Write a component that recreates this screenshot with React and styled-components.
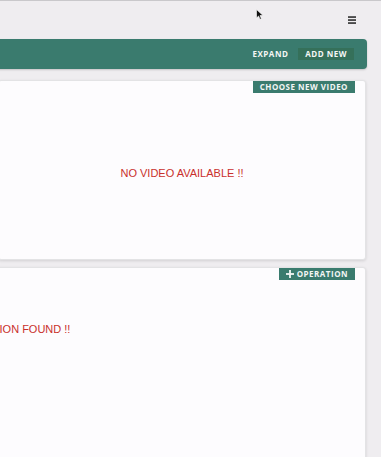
import React from "react";
import styled, { createGlobalStyle } from "styled-components";

const Global = createGlobalStyle`
  html, body { margin: 0; padding: 0; }
  body {
    background: #efedf0;
    font-family: "Liberation Sans", Arial, sans-serif;
    overflow: hidden;
  }
  #root { min-height: 457px; }
`;

const Page = styled.div`
  position: relative;
  min-height: 457px;
  border-top: 1px solid #c9c8cb;
  overflow: hidden;
`;

const Header = styled.header`
  height: 38px;
  display: flex;
  align-items: center;
  justify-content: flex-end;
  padding-right: 25px;
`;

const MenuButton = styled.button`
  background: none;
  border: 0;
  padding: 0;
  width: 8px;
  height: 8px;
  display: flex;
  color: #222;
  cursor: pointer;
`;

const Cursor = styled.svg`
  position: absolute;
  left: 256px;
  top: 8px;
`;

const Shift = styled.div`
  margin-left: -360px;
  margin-right: 14px;
  display: flex;
  flex-direction: column;
`;

const Toolbar = styled.div`
  height: 30px;
  background: #3a7b6e;
  border-radius: 4px;
  box-shadow: 0 1px 2px rgba(0, 0, 0, 0.18);
  display: flex;
  align-items: center;
  justify-content: flex-end;
  gap: 10px;
  padding-right: 13px;
`;

const ToolbarButton = styled.button`
  border: 0;
  background: ${(p) => (p.$filled ? "#35705a" : "transparent")};
  color: #f4f6f5;
  font-family: "Open Sans", Lato, sans-serif;
  font-weight: 700;
  font-size: 8px;
  letter-spacing: 0.5px;
  height: 12px;
  line-height: 12px;
  padding: 0 ${(p) => (p.$filled ? "7px" : "0")};
  cursor: pointer;
`;

const Grid = styled.div`
  display: grid;
  grid-template-columns: 350px 368px;
  column-gap: 8px;
  row-gap: 7px;
  margin-top: 11px;
  margin-right: 1px;
`;

const Card = styled.section`
  grid-column: ${(p) => p.$span};
  background: #fdfcfe;
  border: 1px solid #e3e3e5;
  border-radius: 3px;
  box-shadow: 0 1px 3px rgba(0, 0, 0, 0.12);
  height: ${(p) => p.$height};
  display: flex;
  flex-direction: column;
  box-sizing: border-box;
`;

const CardActions = styled.div`
  display: flex;
  justify-content: flex-end;
  padding-right: 10px;
`;

const ActionButton = styled.button`
  border: 0;
  background: #3a7b6e;
  color: #f2f5f4;
  font-family: "Open Sans", Lato, sans-serif;
  font-weight: 700;
  font-size: 8px;
  letter-spacing: 0.5px;
  height: 12px;
  line-height: 12px;
  padding: 0 7px;
  display: flex;
  align-items: center;
  gap: 3px;
  cursor: pointer;
`;

const Empty = styled.div`
  flex: ${(p) => (p.$grow ? 1 : "none")};
  padding-top: ${(p) => p.$top || "0"};
  padding-bottom: ${(p) => p.$bottom || "0"};
  display: flex;
  align-items: ${(p) => (p.$grow ? "center" : "flex-start")};
  justify-content: center;
  color: #c9302c;
  font-family: "Liberation Sans", Arial, sans-serif;
  font-size: 11px;
  line-height: 13px;
`;

const Plus = () => (
  <svg width="8" height="8" viewBox="0 0 8 8">
    <rect x="3.1" y="0" width="1.8" height="8" fill="currentColor" />
    <rect x="0" y="3.1" width="8" height="1.8" fill="currentColor" />
  </svg>
);

export default function App() {
  return (
    <>
      <Global />
      <Page>
        <Header>
          <MenuButton aria-label="menu">
            <svg width="8" height="8" viewBox="0 0 8 8">
              <rect x="0" y="0.3" width="8" height="1.5" fill="currentColor" />
              <rect x="0" y="3.3" width="8" height="1.5" fill="currentColor" />
              <rect x="0" y="6.3" width="8" height="1.5" fill="currentColor" />
            </svg>
          </MenuButton>
        </Header>
        <Shift>
          <Toolbar>
            <ToolbarButton>EXPAND</ToolbarButton>
            <ToolbarButton $filled>ADD NEW</ToolbarButton>
          </Toolbar>
          <Grid>
            <Card $span="2" $height="180px">
              <CardActions>
                <ActionButton>CHOOSE NEW VIDEO</ActionButton>
              </CardActions>
              <Empty $grow $bottom="6px">NO VIDEO AVAILABLE !!</Empty>
            </Card>
            <Card $span="1 / 3" $height="240px">
              <CardActions>
                <ActionButton>
                  <Plus />
                  OPERATION
                </ActionButton>
              </CardActions>
              <Empty $top="43px">NO OPERATION FOUND !!</Empty>
            </Card>
          </Grid>
        </Shift>
        <Cursor width="8" height="11" viewBox="0 0 8 11">
          <path d="M0.5 0.5 L0.5 9 L2.6 7 L4 10.3 L5.4 9.7 L4 6.5 L7 6.5 Z" fill="#111" stroke="#fff" strokeWidth="0.6" />
        </Cursor>
      </Page>
    </>
  );
}
